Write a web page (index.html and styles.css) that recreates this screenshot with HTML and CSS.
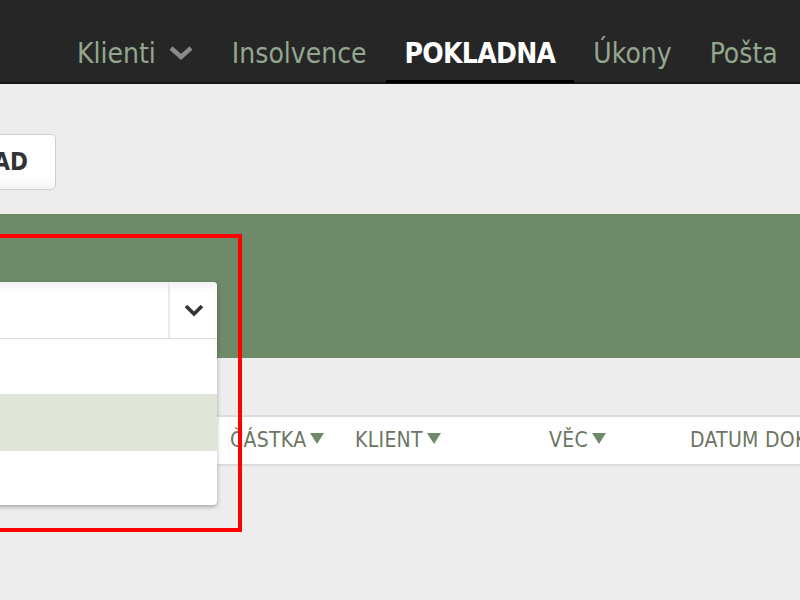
FILE: index.html
```html
<!DOCTYPE html>
<html lang="cs">
<head>
<meta charset="utf-8">
<title>Pokladna</title>
<link rel="stylesheet" href="styles.css">
</head>
<body>
<header class="topbar">
  <nav class="nav">
    <a class="nav-item">Klienti <svg class="nav-caret" width="26" height="16" viewBox="0 0 26 16"><path d="M3 3 L13 12 L23 3" fill="none" stroke="#8a8a8a" stroke-width="4.5"/></svg></a>
    <a class="nav-item">Insolvence</a>
    <a class="nav-item active">POKLADNA</a>
    <a class="nav-item">Úkony</a>
    <a class="nav-item">Pošta</a>
  </nav>
</header>
<main class="page">
  <div class="toolbar">
    <button class="btn">NOVÝ POKLAD</button>
  </div>
  <section class="filter-band">
    <div class="dropdown">
      <div class="select">
        <span class="select-value"></span>
        <span class="select-arrow"><svg width="22" height="14" viewBox="0 0 22 14"><path d="M3 3 L11 11 L19 3" fill="none" stroke="#333" stroke-width="3.6"/></svg></span>
      </div>
      <ul class="options">
        <li class="option"></li>
        <li class="option hl"></li>
        <li class="option"></li>
      </ul>
    </div>
  </section>
  <div class="table-head">
    <span class="th col-castka">ČÁSTKA<i class="tri"></i></span>
    <span class="th col-klient">KLIENT<i class="tri"></i></span>
    <span class="th col-vec">VĚC<i class="tri"></i></span>
    <span class="th col-datum">DATUM DOKLADU</span>
  </div>
</main>
<div class="highlight-box"></div>
</body>
</html>
```

FILE: styles.css
```css
* { box-sizing: border-box; }
html, body { margin: 0; padding: 0; }
body {
  background: #ededed;
  font-family: "DejaVu Sans Condensed", "DejaVu Sans", sans-serif;
  font-stretch: condensed;
  overflow: hidden;
  width: 800px;
  height: 600px;
  position: relative;
}
.topbar {
  height: 84px;
  background: #262626;
  border-bottom: 2px solid #151515;
}
.nav {
  display: flex;
  align-items: flex-end;
  height: 82px;
  padding-left: 58px;
  white-space: nowrap;
}
.nav-item {
  display: flex;
  align-items: flex-end;
  height: 82px;
  padding: 0 19px 12px;
  font-size: 28px;
  line-height: 1;
  color: #93a78e;
  border-bottom: 3px solid transparent;
  margin-bottom: -1px;
}
.nav-item.active {
  color: #fff;
  font-weight: bold;
  letter-spacing: -0.7px;
  border-bottom-color: #000;
}
.nav-caret { margin-left: 12px; margin-bottom: 7px; }

.page {
  margin-left: -260px;
  width: 1200px;
}
.toolbar {
  padding-top: 50px;
  height: 106px;
  display: flex;
}
.btn {
  margin-left: 94px;
  height: 56px;
  padding: 0 27px 0 18px;
  background: linear-gradient(#fff 80%, #f3f3f3);
  border: 1px solid #cfcfcf;
  border-radius: 5px;
  font-family: "DejaVu Sans Condensed", "DejaVu Sans", sans-serif;
  font-weight: bold;
  font-size: 24px;
  color: #333;
}
.filter-band {
  margin-top: 24px;
  height: 144px;
  background: #6e8a69;
  position: relative;
}
.dropdown {
  position: absolute;
  left: 40px;
  top: 68px;
  width: 437px;
  background: #fff;
  border-radius: 4px;
  box-shadow: 0 2px 4px rgba(0,0,0,0.3);
  z-index: 2;
}
.select {
  display: flex;
  height: 57px;
  border-bottom: 1px solid #dcdcdc;
  background: linear-gradient(#f2f2f2, #fff 18%);
  border-radius: 4px 4px 0 0;
}
.select-value { flex: 1; }
.select-arrow {
  width: 49px;
  border-left: 2px solid #e8e8e8;
  display: flex;
  align-items: center;
  justify-content: center;
}
.options { list-style: none; margin: 0; padding: 0; }
.option {
  height: 56px;
  border-bottom: 1px solid #e2e2e2;
}
.option:last-child { border-bottom: 0; height: 54px; }
.option.hl { background: #dfe5d7; }

.table-head {
  margin-top: 57px;
  height: 51px;
  background: #fff;
  border-top: 2px solid #dcdcdc;
  border-bottom: 2px solid #dcdcdc;
  position: relative;
  font-size: 21px;
  line-height: 1;
  color: #6b7561;
  white-space: nowrap;
}
.th { position: absolute; top: 13px; display: flex; align-items: center; letter-spacing: 0.3px; }
.col-castka { left: 490px; }
.col-klient { left: 615px; }
.col-vec { left: 809px; }
.col-datum { left: 950px; }
.tri {
  display: inline-block;
  width: 0; height: 0;
  margin-left: 4px;
  margin-top: -5px;
  border-left: 7px solid transparent;
  border-right: 7px solid transparent;
  border-top: 11px solid #6e8a69;
}
.highlight-box {
  position: absolute;
  left: -10px;
  top: 234px;
  width: 252px;
  height: 298px;
  border: 4px solid #ff0000;
  z-index: 5;
  pointer-events: none;
}
```
